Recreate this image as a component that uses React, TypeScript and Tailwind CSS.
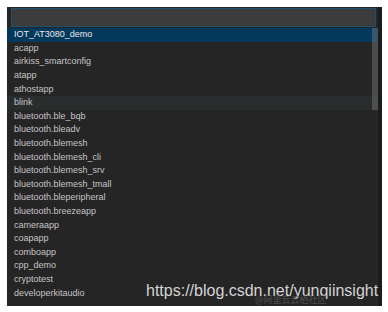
import React from "react";

const items = [
  "IOT_AT3080_demo",
  "acapp",
  "airkiss_smartconfig",
  "atapp",
  "athostapp",
  "blink",
  "bluetooth.ble_bqb",
  "bluetooth.bleadv",
  "bluetooth.blemesh",
  "bluetooth.blemesh_cli",
  "bluetooth.blemesh_srv",
  "bluetooth.blemesh_tmall",
  "bluetooth.bleperipheral",
  "bluetooth.breezeapp",
  "cameraapp",
  "coapapp",
  "comboapp",
  "cpp_demo",
  "cryptotest",
  "developerkitaudio",
];

export default function App() {
  return (
    <div className="w-[388px] h-[312px] bg-white overflow-hidden">
      <div className="relative ml-[7px] mt-[7px] w-[375px] h-[299px] bg-[#252526] flex overflow-hidden">
        <div className="flex-1 flex flex-col">
          <div className="mt-[1px] ml-[4px] mr-[2px] h-[19px] bg-[#3c3c3c] border border-[#1f5070]" />
          <div className="relative mt-[1px] flex flex-col">
            {items.map((it, i) => (
              <div
                key={it}
                className={
                  "h-[13.6px] pl-[7px] flex items-center text-[9px] leading-none " +
                  (i === 0
                    ? "bg-[#04395e] text-[#e8e8e8]"
                    : i === 5
                    ? "bg-[#2a2d2e] text-[#c4c4c4]"
                    : "text-[#c4c4c4]")
                }
                style={{ fontFamily: '"Liberation Sans", Arial, sans-serif' }}
              >
                {it}
              </div>
            ))}
            <div className="absolute right-0 top-0 w-[6px] h-[82px] bg-[rgba(121,121,121,0.45)]" />
          </div>
        </div>
        <div className="w-[4px] bg-[#1c1c1c]" />
        <div
          className="absolute left-[139px] top-[276px] text-[16px] leading-none text-[#d4d4d4]"
          style={{ fontFamily: '"Liberation Sans", Arial, sans-serif' }}
        >
          https://blog.csdn.net/yunqiinsight
        </div>
        <div
          className="absolute left-[248px] top-[288px] text-[9px] leading-none text-[#6a6a6a] opacity-60"
          style={{ fontFamily: '"Noto Sans CJK SC", sans-serif' }}
        >
          @阿里云云栖社区
        </div>
      </div>
    </div>
  );
}
